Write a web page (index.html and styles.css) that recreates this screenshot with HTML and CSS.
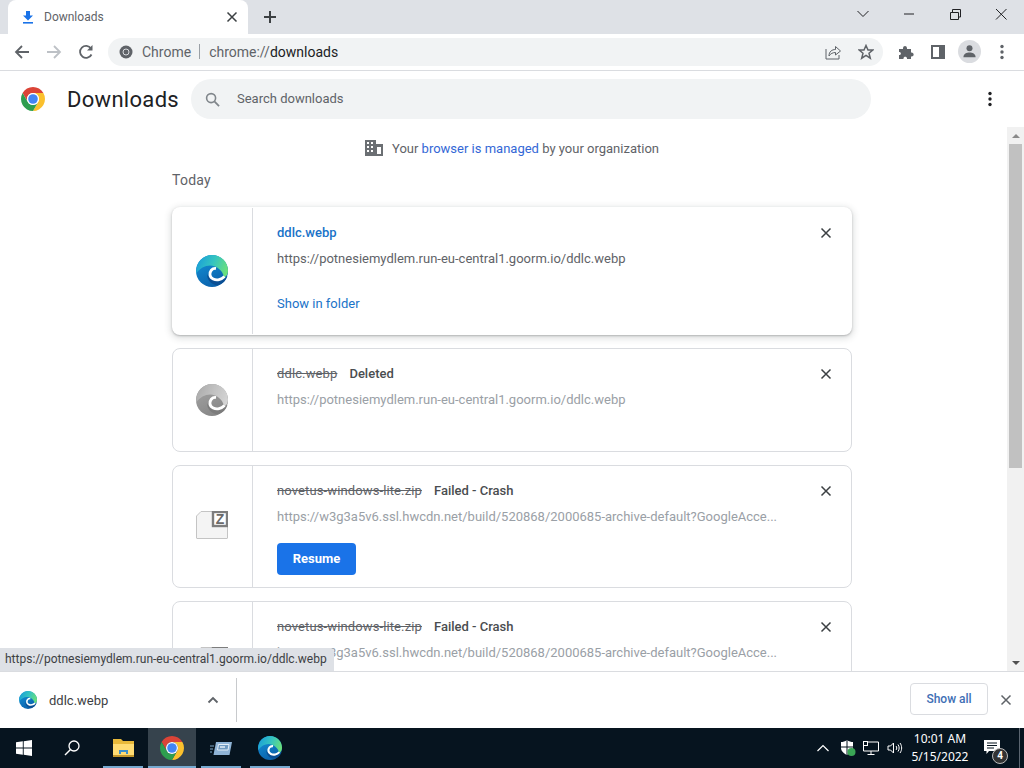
FILE: index.html
```html
<!DOCTYPE html>
<html lang="en">
<head>
  <meta charset="UTF-8">
  <title>Downloads</title>
  <link rel="stylesheet" href="styles.css">
</head>
<body>
  <!-- shared icons -->
  <svg class="icon-defs" width="0" height="0">
    <defs>
      <linearGradient id="edge-top" x1="0" y1="0.3" x2="1" y2="0.6">
        <stop offset="0" stop-color="#1a9fd8"/>
        <stop offset="0.5" stop-color="#35c4c0"/>
        <stop offset="1" stop-color="#6be07a"/>
      </linearGradient>
      <linearGradient id="edge-base" x1="0" y1="0" x2="0.5" y2="1">
        <stop offset="0" stop-color="#1496dc"/>
        <stop offset="1" stop-color="#0b62ac"/>
      </linearGradient>
      <symbol id="edge" viewBox="0 0 32 32">
        <circle cx="16" cy="16" r="16" fill="url(#edge-base)"/>
        <path d="M16 0C25 0 32 7 32 15.500C32 19 30.500 21.500 28 22.500C27.500 18 24 13.500 19 11.500C12 9 5 12 .3 18.500C-.8 8 7 0 16 0Z" fill="url(#edge-top)"/>
        <path d="M11 19C11 26 17 31 23 30C27 28.500 30 25.500 31.500 21C27 26.500 15 28 11 19Z" fill="#0a4f94"/>
        <path d="M20 13.500C16 13 13.500 16.500 14 20C14.500 23.500 19 25.500 23 24.600C25.500 24 27 23 28.500 21.500" fill="none" stroke="#fff" stroke-width="2.800"/>
      </symbol>
      <symbol id="chrome" viewBox="4 4 40 40">
        <path d="M6.680 14A20 20 0 0 1 41.320 14L24 14A10 10 0 0 0 15.340 29Z" fill="#db4437"/>
        <path d="M41.320 14A20 20 0 0 1 24 44L32.660 29A10 10 0 0 0 24 14Z" fill="#fbc02d"/>
        <path d="M24 44A20 20 0 0 1 6.680 14L15.340 29A10 10 0 0 0 32.660 29Z" fill="#2e9e4f"/>
        <circle cx="24" cy="24" r="10" fill="#fff"/>
        <circle cx="24" cy="24" r="8" fill="#4285f4"/>
      </symbol>
      <symbol id="zip-file" viewBox="0 0 32 32">
        <path d="M.5 5L5 .5H18V15H31.500V27C31.500 27.500 31 27.500 31 27.500H1C.5 27.500 .5 27 .5 27Z" fill="#f4f4f4" stroke="#c4c4c4"/>
        <rect x="17" y="1" width="14" height="14" fill="#fff" stroke="#7d7d7d" stroke-width="2.400"/>
        <text x="24" y="13" class="zip-letter">Z</text>
      </symbol>
      <symbol id="close-x" viewBox="0 0 12 12">
        <path d="M1.500 1.500L10.500 10.500M10.500 1.500L1.500 10.500" fill="none" stroke="currentColor" stroke-width="1.500"/>
      </symbol>
      <symbol id="kebab" viewBox="0 0 4 16">
        <circle cx="2" cy="2.500" r="1.700" fill="currentColor"/>
        <circle cx="2" cy="8" r="1.700" fill="currentColor"/>
        <circle cx="2" cy="13.500" r="1.700" fill="currentColor"/>
      </symbol>
    </defs>
  </svg>

  <div class="tabstrip">
    <div class="tab">
      <svg class="tab-icon" viewBox="0 0 12 14"><path d="M4 1H8V5.500H11L6 10.500L1 5.500H4Z" fill="#1a73e8"/><rect x="1" y="12" width="10" height="1.600" fill="#1a73e8"/></svg>
      <span class="tab-title">Downloads</span>
      <svg class="tab-close"><use href="#close-x"/></svg>
    </div>
    <svg class="new-tab" viewBox="0 0 14 14"><path d="M7 1V13M1 7H13" stroke="#3c4043" stroke-width="2"/></svg>
    <div class="window-controls">
      <svg viewBox="0 0 46 34"><path d="M17.500 11L23 16.500L28.500 11" fill="none" stroke="#202124"/></svg>
      <svg viewBox="0 0 46 34"><path d="M18 14H28" stroke="#202124"/></svg>
      <svg viewBox="0 0 46 34"><path d="M18.500 12.500H26.500V19.500H18.500ZM20.500 12.500V9.500H28.500V17H26.500" fill="none" stroke="#202124"/></svg>
      <svg viewBox="0 0 46 34"><path d="M18 9L28.500 19.500M28.500 9L18 19.500" fill="none" stroke="#202124"/></svg>
    </div>
  </div>

  <div class="toolbar">
    <svg class="nav-btn" viewBox="0 0 16 16"><path d="M15 8H2M8 2L2 8L8 14" fill="none" stroke="#5f6368" stroke-width="1.800"/></svg>
    <svg class="nav-btn" viewBox="0 0 16 16"><path d="M1 8H14M8 2L14 8L8 14" fill="none" stroke="#bdc1c6" stroke-width="1.800"/></svg>
    <svg class="nav-btn" viewBox="0 0 16 16"><path d="M13.500 10.500A6 6 0 1 1 13 4.500" fill="none" stroke="#5f6368" stroke-width="1.800"/><path d="M14.500 1V6.500H9Z" fill="#5f6368"/></svg>
    <div class="omnibox">
      <svg class="omni-chrome" viewBox="0 0 14 14"><circle cx="7" cy="7" r="6.500" fill="#5f6368"/><circle cx="7" cy="7" r="3" fill="#5f6368" stroke="#dadce0"/></svg>
      <span class="omni-chip">Chrome</span>
      <span class="omni-sep"></span>
      <span class="omni-url"><span class="omni-scheme">chrome://</span>downloads</span>
      <svg class="omni-share" viewBox="0 0 16 16"><path d="M1 5V15H14V11" fill="none" stroke="#5f6368"/><path d="M4 12C4 7.500 7 5.500 10.500 5.500V2.500L15.500 7L10.500 11V8.500C8 8.500 5.500 9.500 4 12Z" fill="none" stroke="#5f6368"/></svg>
      <svg class="omni-star" viewBox="0 0 16 16"><path d="M8 1.500L10 6H14.800L11 9.200L12.300 14.200L8 11.400L3.700 14.200L5 9.200L1.200 6H6Z" fill="none" stroke="#5f6368" stroke-width="1.500"/></svg>
    </div>
    <svg class="tool-btn puzzle" viewBox="0 0 16 16"><path d="M1 5H5C4.500 1 9.500 1 9 5H13V8.500C16.500 8 16.500 13 13 12.500V15H9C9.500 12 5 12 5.500 15H1V11C3.500 11.500 3.500 7.500 1 8Z" fill="#5f6368"/></svg>
    <svg class="tool-btn sidebar" viewBox="0 0 14 14"><path d="M0 0H14V14H0ZM2 2V12H8V2Z" fill="#5f6368" fill-rule="evenodd"/></svg>
    <div class="avatar">
      <svg viewBox="0 0 16 16"><circle cx="8" cy="4.500" r="3.200" fill="#5f6368"/><path d="M1.500 14C1.500 10.500 5 9 8 9C11 9 14.500 10.500 14.500 14Z" fill="#5f6368"/></svg>
    </div>
    <svg class="tool-kebab"><use href="#kebab"/></svg>
  </div>

  <header class="page-header">
    <svg class="page-logo"><use href="#chrome"/></svg>
    <h1>Downloads</h1>
    <div class="search">
      <svg viewBox="0 0 16 16"><circle cx="6.500" cy="6.500" r="4.800" fill="none" stroke="#80868b" stroke-width="1.700"/><path d="M10 10L15 15" stroke="#80868b" stroke-width="1.900"/></svg>
      <span class="search-text">Search downloads</span>
    </div>
    <svg class="header-kebab"><use href="#kebab"/></svg>
  </header>

  <div class="main">
    <div class="content">
      <div class="column">
        <div class="managed">
          <svg viewBox="0 0 18 16"><path d="M0 0H11V4H18V16H0Z" fill="#6b6f73"/><path d="M2 2H4V4H2ZM6 2H8V4H6ZM2 6H4V8H2ZM6 6H8V8H6ZM2 10H4V12H2ZM6 10H8V12H6ZM12 7H16V14H12Z" fill="#fff"/></svg>
          <span>Your <a class="link" href="#">browser is managed</a> by your organization</span>
        </div>
        <h2 class="date">Today</h2>

        <div class="card card-active">
          <div class="file-icon"><svg class="edge-icon"><use href="#edge"/></svg></div>
          <div class="details">
            <div class="name-row"><a class="file-name" href="#">ddlc.webp</a></div>
            <div class="file-url">https://potnesiemydlem.run-eu-central1.goorm.io/ddlc.webp</div>
            <a class="show-folder" href="#">Show in folder</a>
          </div>
          <svg class="card-close"><use href="#close-x"/></svg>
        </div>

        <div class="card card-deleted">
          <div class="file-icon"><svg class="edge-icon gray"><use href="#edge"/></svg></div>
          <div class="details">
            <div class="name-row"><span class="file-name-dead">ddlc.webp</span><span class="status">Deleted</span></div>
            <div class="file-url dim">https://potnesiemydlem.run-eu-central1.goorm.io/ddlc.webp</div>
          </div>
          <svg class="card-close"><use href="#close-x"/></svg>
        </div>

        <div class="card card-failed">
          <div class="file-icon"><svg class="edge-icon"><use href="#zip-file"/></svg></div>
          <div class="details">
            <div class="name-row"><span class="file-name-dead">novetus-windows-lite.zip</span><span class="status">Failed - Crash</span></div>
            <div class="file-url dim">https://w3g3a5v6.ssl.hwcdn.net/build/520868/2000685-archive-default?GoogleAcce...</div>
            <button class="resume">Resume</button>
          </div>
          <svg class="card-close"><use href="#close-x"/></svg>
        </div>

        <div class="card card-failed">
          <div class="file-icon"><svg class="edge-icon"><use href="#zip-file"/></svg></div>
          <div class="details">
            <div class="name-row"><span class="file-name-dead">novetus-windows-lite.zip</span><span class="status">Failed - Crash</span></div>
            <div class="file-url dim">https://w3g3a5v6.ssl.hwcdn.net/build/520868/2000685-archive-default?GoogleAcce...</div>
          </div>
          <svg class="card-close"><use href="#close-x"/></svg>
        </div>
      </div>
    </div>
    <div class="scrollbar">
      <div class="arrow-up"></div>
      <div class="track"><div class="thumb"></div></div>
      <div class="arrow-down"></div>
    </div>
    <div class="status-bubble">https://potnesiemydlem.run-eu-central1.goorm.io/ddlc.webp</div>
  </div>

  <div class="shelf">
    <div class="shelf-item">
      <svg class="shelf-icon"><use href="#edge"/></svg>
      <span class="shelf-name">ddlc.webp</span>
      <svg class="shelf-chevron" viewBox="0 0 12 8"><path d="M1.500 6.500L6 2L10.500 6.500" fill="none" stroke="#5f6368" stroke-width="1.800"/></svg>
    </div>
    <button class="show-all">Show all</button>
    <svg class="shelf-close"><use href="#close-x"/></svg>
  </div>

  <div class="taskbar">
    <svg class="task-start" viewBox="0 0 16 16"><path d="M0 2.300L6.800 1.300V7.600H0ZM7.700 1.200L16 0V7.600H7.700ZM0 8.400H6.800V14.700L0 13.700ZM7.700 8.400H16V16L7.700 14.800Z" fill="#fff"/></svg>
    <svg class="task-search" viewBox="0 0 16 16"><circle cx="10" cy="6" r="5" fill="none" stroke="#fff" stroke-width="1.300"/><path d="M6.500 9.500L1 15" stroke="#fff" stroke-width="1.500"/></svg>
    <div class="task-app">
      <svg class="task-folder" viewBox="0 0 21 18"><path d="M0 0H8L10 2H21V18H0Z" fill="#e8b93a"/><path d="M0 5H21V17H0Z" fill="#ffdc73"/><path d="M6 15V11H15V15H13V13H8V15Z" fill="#3c8fca"/><rect x="0" y="16" width="21" height="2" fill="#c2962c"/></svg>
    </div>
    <div class="task-app task-current"><svg><use href="#chrome"/></svg></div>
    <div class="task-app">
      <svg class="task-pinned" viewBox="0 0 22 15"><path d="M6 1H22L19.500 14H3.500Z" fill="#8fb4d6"/><path d="M8.500 3.500H19L18 9H7.500Z" fill="#6f9ac0" stroke="#e4eef7"/><path d="M10 6H15" stroke="#e4eef7" stroke-width="1.500"/><path d="M0 5H4M0 8H3M0 11H2" stroke="#7fa8c9"/></svg>
    </div>
    <div class="task-app"><svg><use href="#edge"/></svg></div>
    <div class="tray">
      <svg class="tray-caret" viewBox="0 0 12 8"><path d="M.5 7L6 1.500L11.500 7" fill="none" stroke="#fff" stroke-width="1.200"/></svg>
      <svg class="tray-shield" viewBox="0 0 16 16"><path d="M7 0C9 1.500 11 2 13 2V8C13 11 10 13.500 7 15C4 13.500 1 11 1 8V2C3 2 5 1.500 7 0Z" fill="#fff"/><path d="M1 7H13M7 0V15" stroke="#06141f"/><circle cx="11.500" cy="12" r="4" fill="#3aa655"/></svg>
      <svg class="tray-net" viewBox="0 0 16 14"><path d="M4 1H15.500V10H.5V4" fill="none" stroke="#fff"/><rect x=".5" y=".5" width="4" height="4" fill="#06141f" stroke="#fff"/><path d="M8 10V13M4.500 13.500H11.500" stroke="#fff"/></svg>
      <svg class="tray-sound" viewBox="0 0 16 14"><path d="M1 5H3.500L6.500 2V12L3.500 9H1Z" fill="none" stroke="#fff"/><path d="M9 5C10 6 10 8 9 9M11 3.500C12.500 5.500 12.500 8.500 11 10.500M13 2C15.200 5 15.200 9 13 12" fill="none" stroke="#fff"/></svg>
      <div class="clock"><span>10:01 AM</span><span>5/15/2022</span></div>
      <div class="notify">
        <svg viewBox="0 0 16 15"><path d="M0 0H16V11H5L2.500 14V11H0Z" fill="#fff"/><path d="M3 3H13M3 5.500H13M3 8H10" stroke="#06141f"/></svg>
        <span class="notify-count">4</span>
      </div>
    </div>
  </div>
</body>
</html>
```

FILE: styles.css
```css
* {
  box-sizing: border-box;
}
html, body {
  height: 100%;
}
body {
  margin: 0;
  width: 1024px;
  height: 768px;
  overflow: hidden;
  display: flex;
  flex-direction: column;
  font-family: Roboto, "Liberation Sans", sans-serif;
  font-size: 13px;
  color: #5f6368;
  background: #fff;
}
svg {
  display: block;
  flex: none;
}
.icon-defs {
  position: absolute;
}
.zip-letter {
  font-family: "Liberation Sans", sans-serif;
  font-size: 14px;
  font-weight: 700;
  fill: #6a6a6a;
  text-anchor: middle;
}

/* tab strip */
.tabstrip {
  height: 34px;
  flex: none;
  display: flex;
  align-items: center;
  padding-left: 8px;
  background: #dee1e6;
}
.tab {
  width: 240px;
  height: 34px;
  display: flex;
  align-items: center;
  padding: 0 10px 0 14px;
  background: #fff;
  border-radius: 8px 8px 0 0;
}
.tab-icon {
  width: 12px;
  height: 14px;
}
.tab-title {
  flex: 1;
  margin-left: 10px;
  font-size: 12px;
  color: #5f6368;
}
.tab-close {
  width: 12px;
  height: 12px;
  color: #3c4043;
}
.new-tab {
  width: 14px;
  height: 14px;
  margin-left: 15px;
}
.window-controls {
  margin-left: auto;
  display: flex;
}
.window-controls svg {
  width: 46px;
  height: 34px;
}

/* toolbar */
.toolbar {
  height: 37px;
  flex: none;
  display: flex;
  align-items: center;
  padding: 0 0 1px 14px;
  border-bottom: 1px solid #dadce0;
}
.nav-btn {
  width: 16px;
  height: 16px;
  margin-right: 16px;
}
.omnibox {
  width: 775px;
  height: 28px;
  margin-left: -2px;
  display: flex;
  align-items: center;
  padding-left: 11px;
  background: #f1f3f4;
  border-radius: 14px;
  font-size: 14px;
}
.omni-chrome {
  width: 14px;
  height: 14px;
}
.omni-chip {
  margin-left: 9px;
  color: #5f6368;
}
.omni-sep {
  width: 1px;
  height: 15px;
  margin: 0 9px 0 8px;
  background: #9aa0a6;
}
.omni-url {
  color: #202124;
}
.omni-scheme {
  color: #5f6368;
}
.omni-share {
  width: 16px;
  height: 16px;
  margin-left: auto;
}
.omni-star {
  width: 16px;
  height: 16px;
  margin: 0 9px 0 17px;
}
.tool-btn {
  width: 16px;
  height: 16px;
}
.puzzle {
  margin-left: 15px;
}
.sidebar {
  width: 14px;
  height: 14px;
  margin-left: 17px;
}
.avatar {
  width: 23px;
  height: 23px;
  margin-left: 13px;
  padding: 4px;
  background: #dadce0;
  border-radius: 50%;
}
.tool-kebab {
  width: 4px;
  height: 16px;
  margin-left: 19px;
  color: #5f6368;
}

/* page header */
.page-header {
  height: 56px;
  flex: none;
  display: flex;
  align-items: center;
  padding-left: 21px;
}
.page-logo {
  width: 24px;
  height: 24px;
}
h1 {
  width: 124px;
  margin: 0 0 0 22px;
  font-size: 22px;
  font-weight: 400;
  letter-spacing: .3px;
  color: #202124;
}
.search {
  width: 680px;
  height: 40px;
  display: flex;
  align-items: center;
  padding-left: 14px;
  background: #f1f3f4;
  border-radius: 20px;
  color: #5f6368;
}
.search svg {
  width: 15px;
  height: 15px;
  margin-right: 17px;
}
.search-text {
  margin-top: -2px;
}
.header-kebab {
  width: 4px;
  height: 16px;
  margin-left: 117px;
  color: #202124;
}

/* main area */
.main {
  flex: 1;
  min-height: 0;
  display: flex;
  position: relative;
}
.content {
  flex: 1;
  overflow: hidden;
  padding-left: 172px;
}
.column {
  width: 680px;
}
.managed {
  height: 18px;
  margin-top: 12px;
  display: flex;
  align-items: center;
  justify-content: center;
  gap: 9px;
}
.managed svg {
  width: 18px;
  height: 16px;
}
.link {
  color: #3367d6;
  text-decoration: none;
}
.date {
  margin: 14px 0 18px;
  font-size: 14px;
  line-height: 18px;
  font-weight: 400;
  letter-spacing: .25px;
  color: #5f6368;
}

/* download cards */
.card {
  display: flex;
  margin-bottom: 13px;
  background: #fff;
  border: 1px solid #dadce0;
  border-radius: 8px;
}
.card-active {
  height: 128px;
  border-color: transparent;
  box-shadow: 0 1px 2px rgba(60, 64, 67, .3), 0 2px 6px 2px rgba(60, 64, 67, .15);
}
.card-deleted {
  height: 104px;
}
.card-failed {
  height: 123px;
}
.file-icon {
  width: 80px;
  flex: none;
  display: flex;
  align-items: center;
  justify-content: center;
  padding-right: 1px;
  border-right: 1px solid #dadce0;
}
.edge-icon {
  width: 32px;
  height: 32px;
}
.gray {
  filter: grayscale(1) contrast(.55) brightness(1.3);
}
.details {
  flex: 1;
  padding: 16px 0 0 24px;
}
.name-row {
  height: 18px;
  display: flex;
  align-items: center;
  gap: 12px;
  line-height: 18px;
}
.file-name {
  font-weight: 500;
  color: #1a73c8;
  text-decoration: none;
}
.file-name-dead {
  text-decoration: line-through;
  letter-spacing: .12px;
  color: #5f6368;
}
.status {
  font-weight: 500;
  color: #4a4d50;
}
.file-url {
  margin-top: 8px;
  line-height: 18px;
  color: #5f6368;
  white-space: nowrap;
}
.dim {
  color: #9aa0a6;
}
.show-folder {
  display: block;
  margin-top: 27px;
  line-height: 18px;
  color: #1a73c8;
  text-decoration: none;
}
.resume {
  display: block;
  width: 79px;
  height: 32px;
  margin-top: 17px;
  padding: 0 0 2px;
  border: 0;
  border-radius: 4px;
  background: #1a73e8;
  color: #fff;
  font: 700 13px Roboto, "Liberation Sans", sans-serif;
}
.card-close {
  width: 12px;
  height: 12px;
  margin: 19px 19px 0 0;
  color: #3c4043;
}

/* scrollbar */
.scrollbar {
  width: 17px;
  flex: none;
  display: flex;
  flex-direction: column;
  background: #f1f1f1;
}
.track {
  flex: 1;
  padding: 0 2px;
}
.thumb {
  height: 324px;
  background: #c1c1c1;
}
.arrow-up,
.arrow-down {
  height: 17px;
  display: flex;
  align-items: center;
  justify-content: center;
}
.arrow-up::before {
  content: "";
  border: 4px solid transparent;
  border-top: 0;
  border-bottom: 4px solid #8a8a8a;
}
.arrow-down::before {
  content: "";
  border: 4px solid transparent;
  border-bottom: 0;
  border-top: 4px solid #505050;
}
.status-bubble {
  position: absolute;
  left: 0;
  bottom: 0;
  width: 334px;
  height: 23px;
  padding-left: 5px;
  line-height: 23px;
  font-size: 12px;
  white-space: nowrap;
  color: #3c4043;
  background: #dee1e6;
  border-top-right-radius: 4px;
}

/* download shelf */
.shelf {
  height: 57px;
  flex: none;
  display: flex;
  align-items: center;
  border-top: 1px solid #dadce0;
}
.shelf-item {
  width: 237px;
  height: 44px;
  display: flex;
  align-items: center;
  padding-left: 19px;
  border-right: 1px solid #c8cacd;
}
.shelf-icon {
  width: 18px;
  height: 18px;
}
.shelf-name {
  flex: 1;
  margin-left: 12px;
  font-size: 13px;
  color: #3c4043;
}
.shelf-chevron {
  width: 12px;
  height: 8px;
  margin-right: 17px;
}
.show-all {
  width: 78px;
  height: 32px;
  margin: 0 0 2px auto;
  padding: 0 0 1px;
  background: #fff;
  border: 1px solid #dadce0;
  border-radius: 4px;
  color: #3f6fb5;
  font: 500 12px Roboto, "Liberation Sans", sans-serif;
}
.shelf-close {
  width: 12px;
  height: 12px;
  margin: 0 12px;
  color: #5f6368;
}

/* windows taskbar */
.taskbar {
  height: 40px;
  flex: none;
  display: flex;
  align-items: center;
  background: #06141f;
  color: #fff;
}
.task-start {
  width: 16px;
  height: 16px;
  margin-left: 16px;
}
.task-search {
  width: 16px;
  height: 16px;
  margin: 0 23px 0 32px;
}
.task-app {
  width: 40px;
  height: 40px;
  display: flex;
  align-items: center;
  justify-content: center;
  box-shadow: inset 0 -2px 0 #76a9d0;
  margin-right: 9px;
}
.task-app svg {
  width: 24px;
  height: 24px;
}
.task-app .task-folder {
  width: 21px;
  height: 18px;
}
.task-app .task-pinned {
  width: 22px;
  height: 15px;
}
.task-current {
  width: 48px;
  margin: 0 5px 0 -4px;
  background: #36434d;
}
.tray {
  margin: 0 4px 0 auto;
  height: 40px;
  display: flex;
  align-items: center;
  padding-right: 11px;
  border-right: 1px solid #5a6570;
}
.tray-caret {
  width: 12px;
  height: 8px;
}
.tray-shield {
  width: 16px;
  height: 16px;
  margin-left: 11px;
}
.tray-net {
  width: 16px;
  height: 14px;
  margin-left: 7px;
}
.tray-sound {
  width: 16px;
  height: 14px;
  margin-left: 8px;
}
.clock {
  width: 72px;
  margin-left: 1px;
  display: flex;
  flex-direction: column;
  align-items: center;
  font: 12px/18px "Noto Sans", "Liberation Sans", sans-serif;
}
.notify {
  width: 24px;
  height: 22px;
  margin: 6px 0 0 8px;
  position: relative;
}
.notify svg {
  width: 16px;
  height: 15px;
}
.notify-count {
  position: absolute;
  right: 0;
  bottom: -2px;
  width: 16px;
  height: 16px;
  line-height: 14px;
  text-align: center;
  font-size: 10px;
  font-weight: 700;
  border: 1px solid #bbb;
  border-radius: 50%;
  background: #333;
}
```
